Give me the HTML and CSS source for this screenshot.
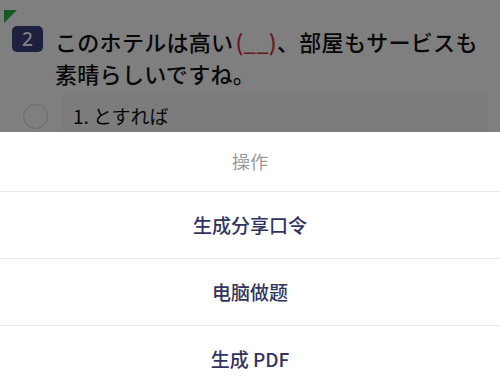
FILE: index.html
```html
<!DOCTYPE html>
<html lang="zh">
<head>
    <meta charset="UTF-8">
    <meta name="viewport" content="width=device-width, initial-scale=1.0">
    <link rel="stylesheet" href="styles.css">
</head>
<body>
    <div class="page">
        <span class="corner"></span>
        <div class="question">
            <span class="badge">2</span>
            <p class="q-text">このホテルは高い<span class="blank">(__)</span>、部屋もサービスも素晴らしいですね。</p>
        </div>
        <div class="option">
            <span class="radio"></span>
            <div class="option-box">1. とすれば</div>
        </div>
        <div class="option">
            <span class="radio"></span>
            <div class="option-box">2. としたら</div>
        </div>
    </div>

    <div class="mask"></div>

    <div class="sheet">
        <div class="sheet-title">操作</div>
        <div class="sheet-item">生成分享口令</div>
        <div class="sheet-item">电脑做题</div>
        <div class="sheet-item">生成 PDF</div>
    </div>
</body>
</html>
```

FILE: styles.css
```css
body {
    margin: 0;
    background: #fff;
    font-family: "Noto Sans CJK JP", "Noto Sans", sans-serif;
    color: #111;
}
.page {
    position: relative;
    padding: 25px 12px 0 12px;
}
.corner {
    position: absolute;
    left: 4px;
    top: 10px;
    width: 0;
    height: 0;
    border-top: 13px solid #2fb24a;
    border-right: 13px solid transparent;
}
.question {
    display: flex;
    gap: 12px;
    align-items: flex-start;
}
.badge {
    flex: none;
    width: 31px;
    height: 26px;
    margin-top: 1px;
    border-radius: 5px;
    background: #3c4080;
    color: #fff;
    font-family: "Noto Sans", sans-serif;
    font-size: 19px;
    font-weight: 500;
    line-height: 26px;
    text-align: center;
}
.q-text {
    margin: 0;
    font-size: 22px;
    font-weight: 500;
    line-height: 32px;
    letter-spacing: 0.3px;
}
.blank {
    color: #d0333d;
    margin-left: 2px;
}
.option {
    display: flex;
    align-items: center;
    gap: 14px;
    margin-top: 3px;
}
.radio {
    flex: none;
    width: 23px;
    height: 23px;
    margin-left: 11px;
    border: 1.5px solid #d6d6d6;
    border-radius: 50%;
}
.option-box {
    flex: 1;
    padding: 0 11px;
    height: 48px;
    line-height: 48px;
    border-radius: 8px;
    background: #f8f8f8;
    font-size: 19px;
}
.mask {
    position: fixed;
    inset: 0;
    background: rgba(0, 0, 0, 0.5);
}
.sheet {
    position: fixed;
    left: 0;
    right: 0;
    top: 132px;
    background: #fff;
    font-family: "Noto Sans CJK SC", sans-serif;
    text-align: center;
}
.sheet-title {
    height: 59px;
    line-height: 59px;
    font-size: 18px;
    color: #999;
    border-bottom: 1px solid #ececec;
}
.sheet-item {
    height: 66px;
    line-height: 66px;
    font-size: 19px;
    font-weight: 500;
    color: #30345f;
    border-bottom: 1px solid #ececec;
}
```
